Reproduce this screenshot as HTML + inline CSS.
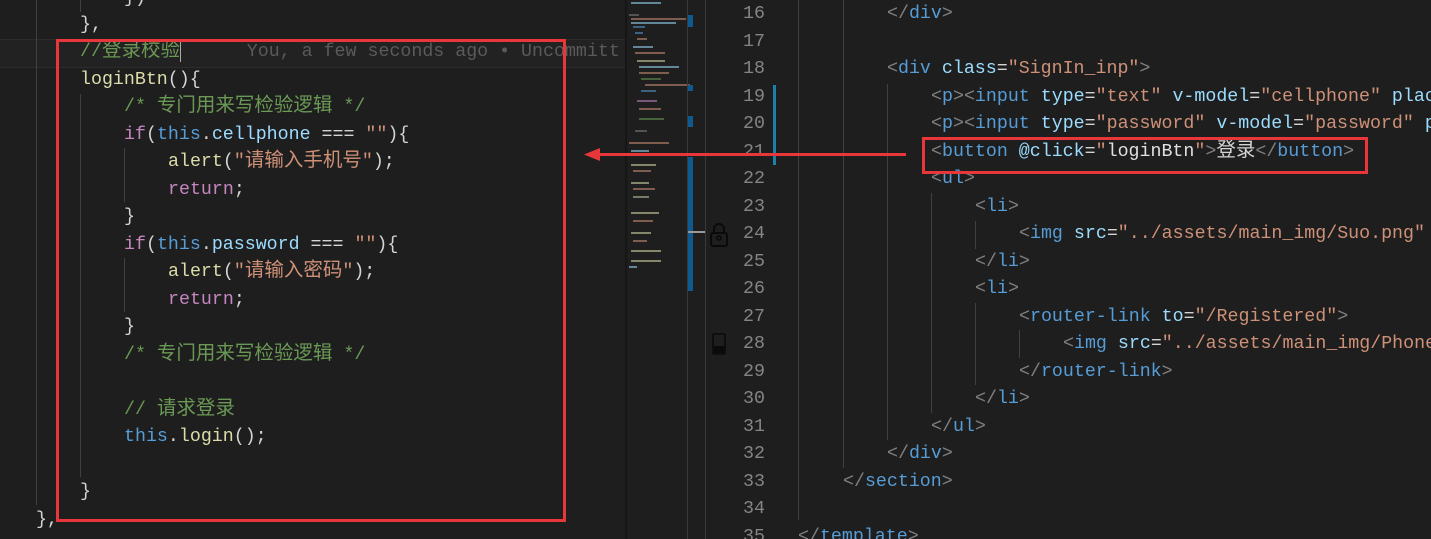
<!DOCTYPE html>
<html><head><meta charset="utf-8"><style>
body{margin:0;width:1431px;height:539px;background:#1e1e1e;overflow:hidden;position:relative;font-family:"Liberation Mono","Noto Sans CJK SC",monospace;font-size:18.3px;}
#wrap{position:absolute;left:0;top:0;width:1431px;height:539px;overflow:hidden}
.l{position:absolute;white-space:pre;line-height:27px;height:27px;color:#d4d4d4}
.z{font-family:"Noto Sans CJK SC",sans-serif;font-size:19.5px;line-height:10px;vertical-align:baseline}
.c{color:#6a9955}.k{color:#c586c0}.t{color:#569cd6}.f{color:#dcdcaa}.p{color:#9cdcfe}.s{color:#ce9178}.g{color:#808080}.a{color:#9cdcfe}
.vg{position:absolute;width:1px;background:#404040}
.n{position:absolute;left:720px;width:45px;text-align:right;color:#858585;line-height:27px;white-space:pre}
.mm{position:absolute;height:2px;opacity:.55}
</style></head><body><div id="wrap">
<div style="position:absolute;left:0;top:39px;width:625px;height:27px;background:#222;border-top:1px solid #2c2c2c;border-bottom:1px solid #2c2c2c"></div>
<div class="vg" style="left:36px;top:0;height:505px"></div>
<div class="vg" style="left:80px;top:0;height:12px"></div>
<div class="vg" style="left:80px;top:94px;height:383px"></div>
<div class="vg" style="left:124px;top:148px;height:54px"></div>
<div class="vg" style="left:124px;top:258px;height:54px"></div>
<div class="l" style="left:124px;top:-15px">})</div>
<div class="l" style="left:80px;top:12px">},</div>
<div class="l" style="left:80px;top:39px"><span class="c">//<span class="z">登录校验</span></span><span style="display:inline-block;width:1px;height:22px;background:#aaa;vertical-align:middle"></span><span style="color:#5a5a5a">      You, a few seconds ago • Uncommitt</span></div>
<div class="l" style="left:80px;top:67px"><span class="f">loginBtn</span>(){</div>
<div class="l" style="left:124px;top:94px"><span class="c">/* <span class="z">专门用来写检验逻辑</span> */</span></div>
<div class="l" style="left:124px;top:122px"><span class="k">if</span>(<span class="t">this</span>.<span class="p">cellphone</span> === <span class="s">""</span>){</div>
<div class="l" style="left:168px;top:149px"><span class="f">alert</span>(<span class="s">"<span class="z">请输入手机号</span>"</span>);</div>
<div class="l" style="left:168px;top:177px"><span class="k">return</span>;</div>
<div class="l" style="left:124px;top:204px">}</div>
<div class="l" style="left:124px;top:232px"><span class="k">if</span>(<span class="t">this</span>.<span class="p">password</span> === <span class="s">""</span>){</div>
<div class="l" style="left:168px;top:259px"><span class="f">alert</span>(<span class="s">"<span class="z">请输入密码</span>"</span>);</div>
<div class="l" style="left:168px;top:287px"><span class="k">return</span>;</div>
<div class="l" style="left:124px;top:314px">}</div>
<div class="l" style="left:124px;top:342px"><span class="c">/* <span class="z">专门用来写检验逻辑</span> */</span></div>
<div class="l" style="left:124px;top:397px"><span class="c">// <span class="z">请求登录</span></span></div>
<div class="l" style="left:124px;top:424px"><span class="t">this</span>.<span class="f">login</span>();</div>
<div class="l" style="left:80px;top:479px">}</div>
<div class="l" style="left:36px;top:507px">},</div>
<div style="position:absolute;left:56px;top:39px;width:504px;height:477px;border:3px solid #e8373a"></div>

<div style="position:absolute;left:625px;top:0;width:2px;height:539px;background:#161616"></div>
<div style="position:absolute;left:627px;top:0;width:60px;height:539px">
<div class="mm" style="left:4px;top:2px;width:30px;background:#9cdcfe"></div>
<div class="mm" style="left:2px;top:14px;width:10px;background:#808080"></div>
<div class="mm" style="left:4px;top:18px;width:55px;background:#ce9178"></div>
<div class="mm" style="left:4px;top:22px;width:45px;background:#9cdcfe"></div>
<div class="mm" style="left:6px;top:26px;width:12px;background:#569cd6"></div>
<div class="mm" style="left:8px;top:32px;width:8px;background:#569cd6"></div>
<div class="mm" style="left:10px;top:38px;width:10px;background:#ce9178"></div>
<div class="mm" style="left:6px;top:46px;width:20px;background:#9cdcfe"></div>
<div class="mm" style="left:8px;top:52px;width:30px;background:#ce9178"></div>
<div class="mm" style="left:10px;top:60px;width:28px;background:#dcdcaa"></div>
<div class="mm" style="left:12px;top:66px;width:40px;background:#9cdcfe"></div>
<div class="mm" style="left:12px;top:72px;width:30px;background:#ce9178"></div>
<div class="mm" style="left:14px;top:78px;width:20px;background:#6a9955"></div>
<div class="mm" style="left:18px;top:84px;width:45px;background:#ce9178"></div>
<div class="mm" style="left:14px;top:90px;width:15px;background:#569cd6"></div>
<div class="mm" style="left:10px;top:100px;width:20px;background:#c586c0"></div>
<div class="mm" style="left:12px;top:108px;width:22px;background:#ce9178"></div>
<div class="mm" style="left:12px;top:118px;width:25px;background:#6a9955"></div>
<div class="mm" style="left:8px;top:130px;width:12px;background:#808080"></div>
<div class="mm" style="left:2px;top:142px;width:40px;background:#ce9178"></div>
<div class="mm" style="left:4px;top:150px;width:18px;background:#9cdcfe"></div>
<div class="mm" style="left:4px;top:164px;width:25px;background:#dcdcaa"></div>
<div class="mm" style="left:6px;top:170px;width:18px;background:#ce9178"></div>
<div class="mm" style="left:4px;top:182px;width:18px;background:#dcdcaa"></div>
<div class="mm" style="left:6px;top:188px;width:22px;background:#ce9178"></div>
<div class="mm" style="left:6px;top:196px;width:16px;background:#b5cea8"></div>
<div class="mm" style="left:4px;top:212px;width:28px;background:#dcdcaa"></div>
<div class="mm" style="left:6px;top:220px;width:20px;background:#ce9178"></div>
<div class="mm" style="left:4px;top:232px;width:20px;background:#dcdcaa"></div>
<div class="mm" style="left:6px;top:240px;width:14px;background:#ce9178"></div>
<div class="mm" style="left:4px;top:250px;width:30px;background:#dcdcaa"></div>
<div class="mm" style="left:4px;top:260px;width:30px;background:#dcdcaa"></div>
<div class="mm" style="left:2px;top:266px;width:8px;background:#9cdcfe"></div>
</div>
<div style="position:absolute;left:687px;top:0;width:1px;height:539px;background:#3a3a3a"></div>
<div style="position:absolute;left:705px;top:0;width:1px;height:539px;background:#3a3a3a"></div>
<div style="position:absolute;left:688px;top:15px;width:5px;height:12px;background:#0e5a8e"></div>
<div style="position:absolute;left:688px;top:85px;width:5px;height:6px;background:#0e5a8e"></div>
<div style="position:absolute;left:688px;top:116px;width:5px;height:11px;background:#0e5a8e"></div>
<div style="position:absolute;left:688px;top:157px;width:5px;height:134px;background:#0e5a8e"></div>
<div style="position:absolute;left:688px;top:231px;width:17px;height:2px;background:#999"></div>
<svg style="position:absolute;left:709px;top:222px" width="20" height="26" viewBox="0 0 20 26"><path d="M5 11V7a5 5 0 0 1 10 0v4" fill="none" stroke="#0a0a0a" stroke-width="2"/><rect x="2" y="11" width="16" height="13" rx="2" fill="none" stroke="#0a0a0a" stroke-width="2"/><circle cx="10" cy="16" r="2" fill="none" stroke="#0a0a0a" stroke-width="1.5"/></svg>
<svg style="position:absolute;left:712px;top:333px" width="14" height="22" viewBox="0 0 14 22"><rect x="1" y="1" width="12" height="20" rx="1" fill="none" stroke="#0a0a0a" stroke-width="1.6"/><rect x="2" y="13" width="10" height="7" fill="#0a0a0a"/></svg>
<div style="position:absolute;left:773px;top:85px;width:3px;height:80px;background:#1b81a8"></div>
<div class="n" style="top:1px">16</div><div class="n" style="top:29px">17</div><div class="n" style="top:56px">18</div><div class="n" style="top:84px">19</div><div class="n" style="top:111px">20</div><div class="n" style="top:139px">21</div><div class="n" style="top:166px">22</div><div class="n" style="top:194px">23</div><div class="n" style="top:221px">24</div><div class="n" style="top:249px">25</div><div class="n" style="top:276px">26</div><div class="n" style="top:304px">27</div><div class="n" style="top:331px">28</div><div class="n" style="top:359px">29</div><div class="n" style="top:386px">30</div><div class="n" style="top:414px">31</div><div class="n" style="top:441px">32</div><div class="n" style="top:469px">33</div><div class="n" style="top:496px">34</div><div class="n" style="top:524px">35</div>
<div class="vg" style="left:798px;top:0;height:520px"></div>
<div class="vg" style="left:843px;top:0;height:468px"></div>
<div class="vg" style="left:887px;top:84px;height:356px"></div>
<div class="vg" style="left:931px;top:193px;height:220px"></div>
<div class="vg" style="left:975px;top:221px;height:28px"></div>
<div class="vg" style="left:975px;top:303px;height:82px"></div>
<div class="vg" style="left:1019px;top:330px;height:28px"></div>
<div class="l" style="left:887px;top:1px"><span class="g">&lt;/</span><span class="t">div</span><span class="g">&gt;</span></div>
<div class="l" style="left:887px;top:56px"><span class="g">&lt;</span><span class="t">div</span> <span class="a">class</span>=<span class="s">"SignIn_inp"</span><span class="g">&gt;</span></div>
<div class="l" style="left:931px;top:84px"><span class="g">&lt;</span><span class="t">p</span><span class="g">&gt;&lt;</span><span class="t">input</span> <span class="a">type</span>=<span class="s">"text"</span> <span class="a">v-model</span>=<span class="s">"cellphone"</span> <span class="a">placeholder</span></div>
<div class="l" style="left:931px;top:111px"><span class="g">&lt;</span><span class="t">p</span><span class="g">&gt;&lt;</span><span class="t">input</span> <span class="a">type</span>=<span class="s">"password"</span> <span class="a">v-model</span>=<span class="s">"password"</span> <span class="a">p</span></div>
<div class="l" style="left:931px;top:139px"><span class="g">&lt;</span><span class="t">button</span> <span class="a">@click</span>=<span class="s">"</span><span style="color:#e0e0e0">loginBtn</span><span class="s">"</span><span class="g">&gt;</span><span class="z">登录</span><span class="g">&lt;/</span><span class="t">button</span><span class="g">&gt;</span></div>
<div class="l" style="left:931px;top:166px"><span class="g">&lt;</span><span class="t">ul</span><span class="g">&gt;</span></div>
<div class="l" style="left:975px;top:194px"><span class="g">&lt;</span><span class="t">li</span><span class="g">&gt;</span></div>
<div class="l" style="left:1019px;top:221px"><span class="g">&lt;</span><span class="t">img</span> <span class="a">src</span>=<span class="s">"../assets/main_img/Suo.png"</span></div>
<div class="l" style="left:975px;top:249px"><span class="g">&lt;/</span><span class="t">li</span><span class="g">&gt;</span></div>
<div class="l" style="left:975px;top:276px"><span class="g">&lt;</span><span class="t">li</span><span class="g">&gt;</span></div>
<div class="l" style="left:1019px;top:304px"><span class="g">&lt;</span><span class="t">router-link</span> <span class="a">to</span>=<span class="s">"/Registered"</span><span class="g">&gt;</span></div>
<div class="l" style="left:1063px;top:331px"><span class="g">&lt;</span><span class="t">img</span> <span class="a">src</span>=<span class="s">"../assets/main_img/Phone</span></div>
<div class="l" style="left:1019px;top:359px"><span class="g">&lt;/</span><span class="t">router-link</span><span class="g">&gt;</span></div>
<div class="l" style="left:975px;top:386px"><span class="g">&lt;/</span><span class="t">li</span><span class="g">&gt;</span></div>
<div class="l" style="left:931px;top:414px"><span class="g">&lt;/</span><span class="t">ul</span><span class="g">&gt;</span></div>
<div class="l" style="left:887px;top:441px"><span class="g">&lt;/</span><span class="t">div</span><span class="g">&gt;</span></div>
<div class="l" style="left:843px;top:469px"><span class="g">&lt;/</span><span class="t">section</span><span class="g">&gt;</span></div>
<div class="l" style="left:798px;top:524px"><span class="g">&lt;/</span><span class="t">template</span><span class="g">&gt;</span></div>
<div style="position:absolute;left:922px;top:137px;width:440px;height:31px;border:3px solid #e8373a"></div>
<div style="position:absolute;left:596px;top:153px;width:310px;height:3px;background:#e8373a"></div>
<svg style="position:absolute;left:584px;top:147px" width="16" height="15"><path d="M0 7.5L16 1V14Z" fill="#e8373a"/></svg>
</div></body></html>
